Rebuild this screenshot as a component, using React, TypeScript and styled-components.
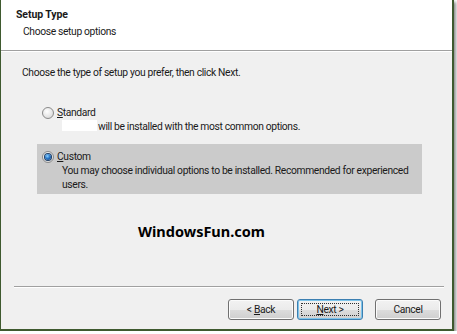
import styled, { createGlobalStyle } from 'styled-components';

const GlobalStyle = createGlobalStyle`
  html, body {
    margin: 0;
    padding: 0;
    background: #ffffff;
  }
  body {
    font-family: Roboto, "Noto Sans", sans-serif;
    font-size: 10.3px;
    letter-spacing: -0.35px;
    color: #1a1a1a;
  }
`;

const Frame = styled.div`
  box-sizing: border-box;
  width: 454px;
  height: 331px;
  display: flex;
  flex-direction: column;
  border-left: 1px solid #3f5a2f;
  border-right: 2px solid #3f5a2f;
  border-bottom: 2px solid #3f5a2f;
  box-shadow: 2px 2px 3px rgba(0, 0, 0, 0.45);
  background: #f0f0f0;
`;

const Header = styled.div`
  height: 51px;
  background: #ffffff;
  border-bottom: 1px solid #a0a0a0;
  box-shadow: 0 1px 0 #ffffff;
  padding: 7px 0 0 15px;
  box-sizing: border-box;
`;

const Title = styled.div`
  font-weight: bold;
  font-size: 10.5px;
  letter-spacing: -0.1px;
  line-height: 15px;
`;

const Subtitle = styled.div`
  line-height: 15px;
  margin: 2px 0 0 7px;
`;

const Content = styled.div`
  flex: 1;
  display: flex;
  flex-direction: column;
  padding: 14px 0 0 21px;
`;

const Intro = styled.div`
  line-height: 15px;
`;

const Options = styled.div`
  display: flex;
  flex-direction: column;
  gap: 8px;
  margin: 20px 0 0 15px;
  width: 385px;
`;

const Option = styled.div<{ $selected?: boolean }>`
  padding: 5px 0 2px 5px;
  background: ${(p) => (p.$selected ? '#cbcbcb' : 'transparent')};
`;

const OptionRow = styled.div`
  display: flex;
  align-items: center;
  gap: 3px;
  height: 15px;
  line-height: 15px;
`;

const Radio = styled.span<{ $checked?: boolean }>`
  box-sizing: border-box;
  width: 12px;
  height: 12px;
  border-radius: 50%;
  border: 1px solid #8a8a8a;
  background: radial-gradient(circle at 40% 35%, #ffffff 0%, #e4e4e4 60%, #cfcfcf 100%);
  display: inline-flex;
  align-items: center;
  justify-content: center;

  &::after {
    content: '';
    display: ${(p) => (p.$checked ? 'block' : 'none')};
    width: 6px;
    height: 6px;
    border-radius: 50%;
    background: radial-gradient(circle at 40% 35%, #8fd3ff 0%, #2a78c8 45%, #0b3a78 100%);
    box-shadow: 0 0 0 1px #1f3f66;
  }
`;

const Accel = styled.span`
  text-decoration: underline;
`;

const Description = styled.div`
  margin-left: 20px;
  line-height: 14px;
  white-space: nowrap;
`;

const Blank = styled.span`
  display: inline-block;
  width: 35px;
  height: 11px;
  background: #ffffff;
  vertical-align: -1px;
  margin-right: 1px;
`;

const Watermark = styled.div`
  margin: 27px 0 0 116px;
  font-family: "Noto Sans", sans-serif;
  font-weight: bold;
  font-size: 14.5px;
  letter-spacing: 0;
  line-height: 20px;
  color: #000000;
`;

const Footer = styled.div`
  display: flex;
  flex-direction: column;
`;

const Separator = styled.div`
  height: 1px;
  margin: 0 8px 0 13px;
  background: #a0a0a0;
  box-shadow: 0 1px 0 #ffffff;
`;

const ButtonBar = styled.div`
  display: flex;
  justify-content: flex-end;
  align-items: center;
  padding: 12px 11px 9px 0;
`;

const Button = styled.button<{ $default?: boolean; $gap?: number }>`
  box-sizing: border-box;
  width: 66px;
  height: 21px;
  margin-left: ${(p) => p.$gap ?? 0}px;
  padding: 0;
  font-family: inherit;
  font-size: 10.3px;
  letter-spacing: -0.35px;
  color: #1a1a1a;
  border-radius: 3px;
  border: 1px solid ${(p) => (p.$default ? '#3c7fb1' : '#707070')};
  background: linear-gradient(#f2f2f2 0%, #ebebeb 50%, #dddddd 51%, #cfcfcf 100%);
  box-shadow: inset 0 0 0 1px ${(p) => (p.$default ? '#7ec4ea' : '#fbfbfb')};
  position: relative;
  line-height: 17px;
`;

const FocusRing = styled.span`
  position: absolute;
  inset: 3px;
  border: 1px dotted #303030;
  border-radius: 1px;
`;

export default function App() {
  return (
    <>
      <GlobalStyle />
      <Frame>
        <Header>
          <Title>Setup Type</Title>
          <Subtitle>Choose setup options</Subtitle>
        </Header>
        <Content>
          <Intro>Choose the type of setup you prefer, then click Next.</Intro>
          <Options>
            <Option>
              <OptionRow>
                <Radio />
                <span>
                  <Accel>S</Accel>tandard
                </span>
              </OptionRow>
              <Description>
                <Blank />
                will be installed with the most common options.
              </Description>
            </Option>
            <Option $selected>
              <OptionRow>
                <Radio $checked />
                <span>
                  <Accel>C</Accel>ustom
                </span>
              </OptionRow>
              <Description>
                You may choose individual options to be installed. Recommended for experienced
                <br />
                users.
              </Description>
            </Option>
          </Options>
          <Watermark>WindowsFun.com</Watermark>
        </Content>
        <Footer>
          <Separator />
          <ButtonBar>
            <Button>
              &lt; <Accel>B</Accel>ack
            </Button>
            <Button $default $gap={3}>
              <FocusRing />
              <Accel>N</Accel>ext &gt;
            </Button>
            <Button $gap={12}>Cancel</Button>
          </ButtonBar>
        </Footer>
      </Frame>
    </>
  );
}
